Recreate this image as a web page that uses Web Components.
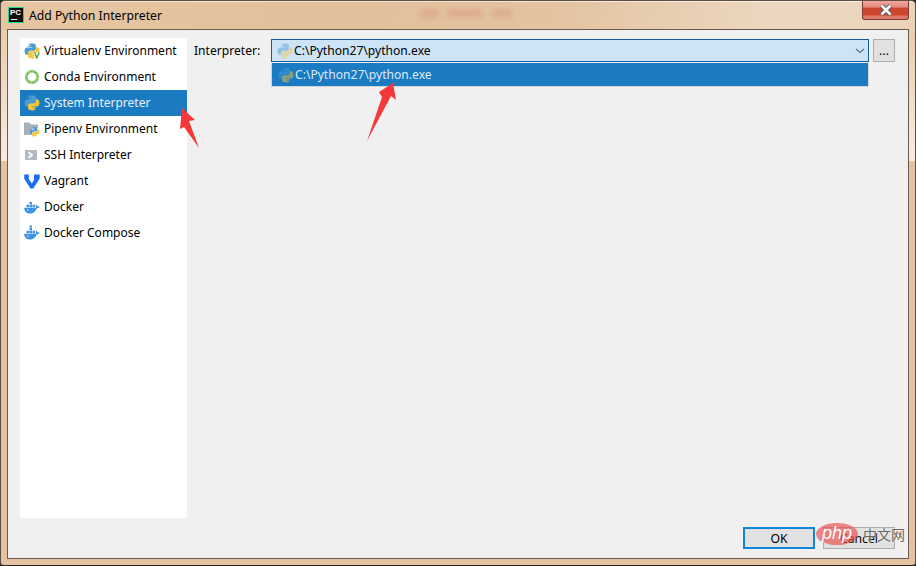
<!DOCTYPE html>
<html>
<head>
<meta charset="utf-8">
<title>Add Python Interpreter</title>
<style>
  html, body { margin: 0; padding: 0; }
  body { width: 916px; height: 566px; overflow: hidden; background: #2b2622; font-family: "Noto Sans", sans-serif; }
</style>
</head>
<body>
<add-interpreter-dialog>
  <side-item slot="side" label="Virtualenv Environment" icon="venv"></side-item>
  <side-item slot="side" label="Conda Environment" icon="conda"></side-item>
  <side-item slot="side" label="System Interpreter" icon="python" selected></side-item>
  <side-item slot="side" label="Pipenv Environment" icon="pipenv"></side-item>
  <side-item slot="side" label="SSH Interpreter" icon="ssh"></side-item>
  <side-item slot="side" label="Vagrant" icon="vagrant"></side-item>
  <side-item slot="side" label="Docker" icon="docker"></side-item>
  <side-item slot="side" label="Docker Compose" icon="compose"></side-item>
</add-interpreter-dialog>

<script>
// the snake, both halves
const py = `
  <path fill="#4a9bd6" d="M7.900 .6C4.400 .6 4.600 2.100 4.600 2.100V3.900H8.100V4.500H3.200S.6 4.200 .6 8s2.200 3.700 2.200 3.700H4.200V9.900S4.100 7.700 6.300 7.700H9.800S11.900 7.700 11.900 5.700V2.700S12.200 .6 7.900 .6zM6 1.800A.65 .65 0 1 1 6 3.100 .65 .65 0 0 1 6 1.800z"/>
  <path fill="#f5c63a" d="M8.100 15.400C11.600 15.400 11.400 13.900 11.400 13.900V12.100H7.900V11.500H12.800S15.400 11.800 15.400 8 13.200 4.300 13.200 4.300H11.800V6.100S11.900 8.300 9.700 8.300H6.200S4.100 8.300 4.100 10.300V13.300S3.800 15.400 8.100 15.400zM10 14.200A.65 .65 0 1 1 10 12.900 .65 .65 0 0 1 10 14.200z"/>`;

const whale = `
  <path fill="#3c92e0" d="M.2 8.800H11.700C12.300 7.700 12.100 6.600 11.500 5.900 12.400 5.700 13.200 6.400 13.500 7.300 14.200 7.100 15 7.300 15.700 7.800 15.100 9 13.900 9.400 12.800 9.200 11.800 12.200 9.300 14.500 5.600 14.500 2.100 14.500 .2 11.900 .2 8.800z"/>
  <circle cx="3.800" cy="11" r=".7" fill="#fff"/>
  <path fill="#3c92e0" d="M2.500 5.800H5V8.200H2.500zM5.500 5.800H8V8.200H5.500zM8.500 5.800H11V8.200H8.500zM5.500 3H8V5.300H5.500z"/>`;

const icons = {
  venv: py + `<path d="M10.500 9.200l2.300 5.600 2.500-5.600" fill="none" stroke="#fff" stroke-width="3"/><path d="M10.500 9.200l2.300 5.600 2.500-5.600" fill="none" stroke="#57a35a" stroke-width="1.500"/>`,
  conda: `<circle cx="8" cy="8" r="5.700" fill="none" stroke="#79bd5e" stroke-width="2.600"/><circle cx="8" cy="8" r="5.700" fill="none" stroke="#c9e6ba" stroke-width="1" stroke-dasharray="1.500 3"/>`,
  python: py,
  pipenv: `<path fill="#a7b1b8" d="M0 1.500H5.500L7 3.500H14V7H8V14H0z"/><g transform="translate(5.500 5.500) scale(.65)">${py}</g>`,
  ssh: `<rect x="1" y="3" width="12" height="10" fill="#b2bbc1"/><path d="M4.500 5.200L8 8 4.500 10.800" fill="none" stroke="#fff" stroke-width="1.800"/>`,
  vagrant: `<path fill="#1b6ff0" d="M.2 1.500H4.800V6L7.800 10.500 10 7V1.500H15.700V5.500L9.300 15.400H6.500L.2 5.800z"/>`,
  docker: whale,
  compose: whale + `<path fill="#3c92e0" d="M5.500 .4H8V2.600H5.500z"/>`
};

const svgIcon = (body) => `<svg viewBox="0 0 16 16" width="16" height="16">${body}</svg>`;

class TitleBar extends HTMLElement {
  constructor () {
    super();
    this.attachShadow({ mode: "open" });
    this.shadowRoot.innerHTML = `
      <style>
        :host { display: flex; align-items: center; height: 28px; padding-left: 1px; box-sizing: border-box; gap: 5px; }
        .logo { width: 14px; height: 14px; background: #0d0d0d; border: 1px solid #21d789; color: #fff; position: relative; }
        .logo span { position: absolute; left: 1px; top: 0; font: bold 8px/9px "Liberation Sans", sans-serif; }
        .logo i { position: absolute; left: 2px; bottom: 2px; width: 6px; height: 1px; background: #fff; }
        .title { font: 12.200px "Noto Sans", sans-serif; color: #000; }
        .close { align-self: flex-start; margin-left: auto; width: 47px; height: 19px; box-sizing: border-box; border: 1px solid #7d3c33; border-top: 0; border-radius: 0 0 3px 3px; background: linear-gradient(#f0a59b 0, #e58a7f 35%, #c8452c 38%, #d0492f 78%, #e07a68 84%, #d9776a 100%); display: flex; align-items: center; justify-content: center; }
      </style>
      <div class="logo"><span>PC</span><i></i></div>
      <div class="title"><slot></slot></div>
      <div class="close"><svg width="14" height="12" viewBox="0 0 14 12"><path d="M2.500 1.500l9 9M11.500 1.500l-9 9" stroke="#40505f" stroke-width="4.400"/><path d="M2.500 1.500l9 9M11.500 1.500l-9 9" stroke="#f4f6f8" stroke-width="2.800"/></svg></div>
    `;
  }
}

class SideItem extends HTMLElement {
  constructor () {
    super();
    this.attachShadow({ mode: "open" });
    this.shadowRoot.innerHTML = `
      <style>
        :host { display: flex; align-items: center; height: 26px; padding-left: 4px; gap: 4px; color: #000; white-space: nowrap; }
        :host([selected]) { background: #1a7ac2; color: #e8f2fa; }
        .ic { width: 16px; height: 16px; display: flex; }
        .t { font: 12px "Noto Sans", sans-serif; padding-bottom: 2px; }
      </style>
      <div class="ic">${svgIcon(icons[this.getAttribute("icon")])}</div>
      <div class="t">${this.getAttribute("label")}</div>
    `;
  }
}

class InterpreterCombo extends HTMLElement {
  constructor () {
    super();
    this.attachShadow({ mode: "open" });
    this.shadowRoot.innerHTML = `
      <style>
        :host { display: block; flex: 1; position: relative; }
        .box { height: 23px; box-sizing: border-box; border: 1px solid #0d5c9e; background: #cde4f7; display: flex; align-items: center; padding-left: 5px; gap: 1px; font: 12.100px "Noto Sans", sans-serif; color: #000; }
        .box svg:first-child { opacity: .45; }
        .arrow { margin-left: auto; margin-right: 3px; }
        .menu { position: absolute; left: 0; right: 0; top: 24px; height: 24px; box-sizing: border-box; border: 1px solid #d4d4d4; border-top: 0; background: #1a7ac2; display: flex; align-items: center; padding-left: 6px; gap: 1px; color: #dcebf7; font: 12.100px "Noto Sans", sans-serif; }
        .menu svg { opacity: .5; }
      </style>
      <div class="box">${svgIcon(py)}<span>C:\\Python27\\python.exe</span>
        <svg class="arrow" width="10" height="6" viewBox="0 0 10 6"><path d="M1 1l4 3.500L9 1" fill="none" stroke="#6a7278" stroke-width="1.300"/></svg></div>
      <div class="menu">${svgIcon(py)}<span>C:\\Python27\\python.exe</span></div>
    `;
  }
}

class FlatButton extends HTMLElement {
  constructor () {
    super();
    this.attachShadow({ mode: "open" });
    this.shadowRoot.innerHTML = `
      <style>
        :host { display: flex; align-items: center; justify-content: center; width: 72px; height: 22px; box-sizing: border-box; border: 1px solid #adadad; background: #e1e1e1; font: 12.200px "Noto Sans", sans-serif; color: #000; }
        :host([primary]) { border: 2px solid #0f86d9; }
        :host([small]) { width: 22px; height: 23px; }
      </style>
      <slot></slot>
    `;
  }
}

class AddInterpreterDialog extends HTMLElement {
  constructor () {
    super();
    this.attachShadow({ mode: "open" });
    this.shadowRoot.innerHTML = `
      <style>
        :host { display: block; width: 916px; height: 566px; box-sizing: border-box; position: relative; border: 1px solid #5e4f44; border-bottom-color: #2b2622; border-radius: 5px 5px 4px 4px; overflow: hidden;
          background:
            linear-gradient(100deg, #e6c6a2 0%, #e2c09b 35%, #e3c3a0 60%, #ecd8c1 85%, #ead3ba 100%) 0 0 / 100% 29px no-repeat,
            linear-gradient(#e8cdb0, #f8ecdf) 0 29px / 100% 131px no-repeat,
            #e4c3a2;
          box-shadow: inset 0 1px 0 rgba(255,255,255,.6); }
        .frame { height: 100%; display: flex; flex-direction: column; padding: 0 6px 6px 6px; box-sizing: border-box; }
        .client { flex: 1; box-sizing: border-box; border: 1px solid #6b5a4e; background: #f0f0f0; display: flex; flex-direction: column; padding: 8px 13px 9px 12px; }
        .main { flex: 1; display: flex; gap: 7px; min-height: 0; }
        .list { width: 167px; background: #fff; }
        .right { flex: 1; display: flex; align-items: flex-start; padding-top: 1px; min-width: 0; }
        .lbl { font: 12.100px "Noto Sans", sans-serif; color: #000; width: 77px; height: 23px; display: flex; align-items: center; }
        .right flat-button { margin-left: 4px; }
        .foot { display: flex; justify-content: flex-end; gap: 8px; padding-top: 9px; }
        .blur { position: absolute; top: 8px; height: 9px; background: #d99e80; filter: blur(2.500px); opacity: .55; }
        .overlay { position: absolute; left: -1px; top: -1px; pointer-events: none; }
        .wm { position: absolute; left: 815px; top: 522px; width: 42px; height: 22px; border-radius: 50%; background: rgba(236,80,80,.68); color: #fff; font: italic 18px/20px "Liberation Sans", sans-serif; text-align: center; }
        .wm2 { position: absolute; left: 862px; top: 522px; height: 22px; font: 14px/22px "Noto Sans CJK SC", sans-serif; color: #666; text-shadow: 0 0 2px #fff; white-space: nowrap; }
      </style>
      <div class="frame">
        <title-bar>Add Python Interpreter</title-bar>
        <div class="client">
          <div class="main">
            <div class="list"><slot name="side"></slot></div>
            <div class="right">
              <div class="lbl">Interpreter:</div>
              <interpreter-combo></interpreter-combo>
              <flat-button small>...</flat-button>
            </div>
          </div>
          <div class="foot">
            <flat-button primary>OK</flat-button>
            <flat-button>Cancel</flat-button>
          </div>
        </div>
      </div>
      <div class="blur" style="left:419px;width:18px"></div>
      <div class="blur" style="left:446px;width:36px"></div>
      <div class="blur" style="left:491px;width:20px"></div>
      <svg class="overlay" width="916" height="566" viewBox="0 0 916 566">
        <path fill="#f5393a" d="M182 108L195 120 189 121 199 148 184 127 180 129z"/>
        <path fill="#f5393a" d="M393 83L396 100 391 96 367 141 382 97 379 92z"/>
      </svg>
      <div class="wm">php</div>
      <div class="wm2">中文网</div>
    `;
  }
}

customElements.define("title-bar", TitleBar);
customElements.define("side-item", SideItem);
customElements.define("interpreter-combo", InterpreterCombo);
customElements.define("flat-button", FlatButton);
customElements.define("add-interpreter-dialog", AddInterpreterDialog);
</script>
</body>
</html>
